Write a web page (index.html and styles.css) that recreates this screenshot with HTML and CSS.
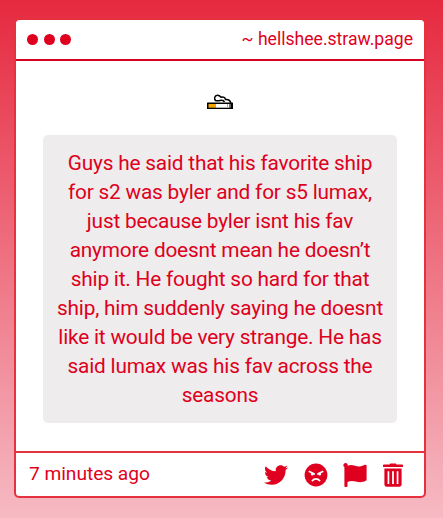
FILE: index.html
```html
<!DOCTYPE html>
<html lang="en">

<head>
    <meta charset="UTF-8">
    <meta name="viewport" content="width=device-width, initial-scale=1.0">
    <title>hellshee.straw.page</title>
    <link rel="stylesheet" href="styles.css">
</head>

<body>
    <div class="window">
        <header class="title-bar">
            <div class="dots">
                <span class="dot"></span>
                <span class="dot"></span>
                <span class="dot"></span>
            </div>
            <div class="site-name">~ hellshee.straw.page</div>
        </header>

        <main class="content">
            <svg class="cigarette" width="28" height="16" viewBox="0 0 28 16">
                <path d="M9.500 6.800C7.500 5 8.500 1.200 11.500 1.200c2 0 2.700 1 3.500 2 2.500-.8 4.200.3 4.500 2.300 2.500-.3 4.700.8 5.300 3.500H13z" fill="#fff" />
                <path d="M12 6.800H10C7.500 5 8.500 1.200 11.500 1.200c2 0 2.700 1 3.500 2 2.500-.8 4.200.3 4.500 2.300 2.500-.3 4.700.8 5.300 3.500M11 6.800c2.500.4 3-.8 5-.6 1.500.1 2 .8 2.500 1.800" fill="none" stroke="#000" stroke-width="1.500" />
                <rect x="1" y="8.500" width="26" height="6.500" rx=".6" fill="#000" />
                <rect x="2.500" y="10" width="7" height="3.700" fill="#f5a400" />
                <rect x="9.500" y="10" width="14" height="3.700" fill="#fff" />
                <rect x="21" y="10" width="1" height="3.700" fill="#f28b6b" />
                <rect x="23.500" y="10" width="1.500" height="3.700" fill="#666" />
            </svg>
            <p class="message">Guys he said that his favorite ship for s2 was byler and for s5 lumax, just because byler isnt his fav anymore doesnt mean he doesn’t ship it. He fought so hard for that ship, him suddenly saying he doesnt like it would be very strange. He has said lumax was his fav across the seasons</p>
        </main>

        <footer class="footer">
            <span class="time">7 minutes ago</span>
            <div class="actions">
                <svg class="icon" viewBox="0 0 512 512">
                    <path d="M459.37 151.716c.325 4.548.325 9.097.325 13.645 0 138.72-105.583 298.558-298.558 298.558-59.452 0-114.68-17.219-161.137-47.106 8.447.974 16.568 1.299 25.34 1.299 49.055 0 94.213-16.568 130.274-44.832-46.132-.975-84.792-31.188-98.112-72.772 6.498.974 12.995 1.624 19.818 1.624 9.421 0 18.843-1.300 27.614-3.573-48.081-9.747-84.143-51.980-84.143-102.985v-1.299c13.969 7.797 30.214 12.670 47.431 13.319-28.264-18.843-46.781-51.005-46.781-87.391 0-19.492 5.197-37.360 14.294-52.954 51.655 63.675 129.300 105.258 216.365 109.807-1.624-7.797-2.599-15.918-2.599-24.040 0-57.828 46.782-104.934 104.934-104.934 30.213 0 57.502 12.670 76.670 33.137 23.715-4.548 46.456-13.320 66.599-25.340-7.798 24.366-24.366 44.833-46.132 57.827 21.117-2.273 41.584-8.122 60.426-16.243-14.292 20.791-32.161 39.308-52.628 54.253z" />
                </svg>
                <svg class="icon" viewBox="0 0 24 24">
                    <circle cx="12" cy="12" r="11.400" />
                    <path class="face-line" d="M5.300 8.600l5 2.300M18.700 8.600l-5 2.300M8.300 17.700c1.800-2.500 5.600-2.500 7.400 0" />
                    <circle class="eye" cx="8.300" cy="11" r="1.500" />
                    <circle class="eye" cx="15.700" cy="11" r="1.500" />
                </svg>
                <svg class="icon" viewBox="0 0 24 24">
                    <path d="M2.500 0a2.200 2.200 0 0 1 2.200 2.700C10 .4 13 4.800 18 3.300c1.500-.4 2.700-1 3.900-1.500.9-.4 1.700.1 1.700 1v13.700c0 .6-.2 1-.8 1.300-7.700 3.900-11.300-1.800-18.300 1.100v4.200c0 .6-.4.9-.9.900H2.300c-.6 0-.9-.4-.9-.9V4.100A2.200 2.200 0 0 1 2.500 0z" />
                </svg>
                <svg class="icon trash" viewBox="0 0 24 24">
                    <path fill-rule="evenodd" d="M8.500 1.500L9.200.4h5.600l.7 1.100h5.600c.6 0 .9.300.9.900v1.700H2V2.400c0-.6.3-.9.900-.9zM3.400 5.500h17.200v16.100c0 1.200-.9 2.100-2.100 2.100h-13c-1.200 0-2.100-.9-2.100-2.100zM6.600 8.300v12.600h1.700V8.300zM11.100 8.300v12.600h1.800V8.300zM15.700 8.300v12.600h1.700V8.300z" />
                </svg>
            </div>
        </footer>
    </div>
</body>

</html>
```

FILE: styles.css
```css
* {
    margin: 0;
    padding: 0;
    box-sizing: border-box;
}

body {
    min-height: 100vh;
    padding: 18px 17px 20px 14px;
    background: linear-gradient(180deg, #e6293f 0%, #f6bac3 100%);
    font-family: Roboto, sans-serif;
    color: #df0020;
}

.window {
    height: 480px;
    display: flex;
    flex-direction: column;
    background: #fff;
    background-clip: padding-box;
    border: 2px solid #e6323e;
    border-radius: 5px;
}

.title-bar {
    height: 41px;
    display: flex;
    align-items: center;
    justify-content: space-between;
    padding: 0 11px;
    border-bottom: 2px solid #d80020;
}

.dots {
    display: flex;
    gap: 5.5px;
}

.dot {
    width: 11px;
    height: 11px;
    border-radius: 50%;
    background: #df0020;
}

.site-name {
    padding-bottom: 1px;
    font-size: 17.6px;
}

.content {
    flex: 1;
    display: flex;
    flex-direction: column;
    align-items: center;
    padding-top: 33px;
}

.cigarette {
    margin-bottom: 25px;
}

.message {
    width: 354px;
    padding: 14px 12px 13px;
    background: #eeecec;
    border-radius: 5px;
    font-size: 20.8px;
    line-height: 29px;
    letter-spacing: -0.19px;
    text-align: center;
}

.footer {
    height: 45px;
    display: flex;
    align-items: center;
    justify-content: space-between;
    padding: 0 19px 0 13px;
    border-top: 2px solid #e6323e;
}

.time {
    padding-bottom: 2px;
    font-size: 19.2px;
    letter-spacing: -0.05px;
}

.actions {
    display: flex;
    gap: 15.7px;
}

.icon {
    width: 24px;
    height: 24px;
    fill: #df0020;
}

.trash {
    margin-left: -2px;
}

.face-line {
    fill: none;
    stroke: #fff;
    stroke-width: 1.6;
    stroke-linecap: round;
}

.eye {
    fill: #fff;
}
```
